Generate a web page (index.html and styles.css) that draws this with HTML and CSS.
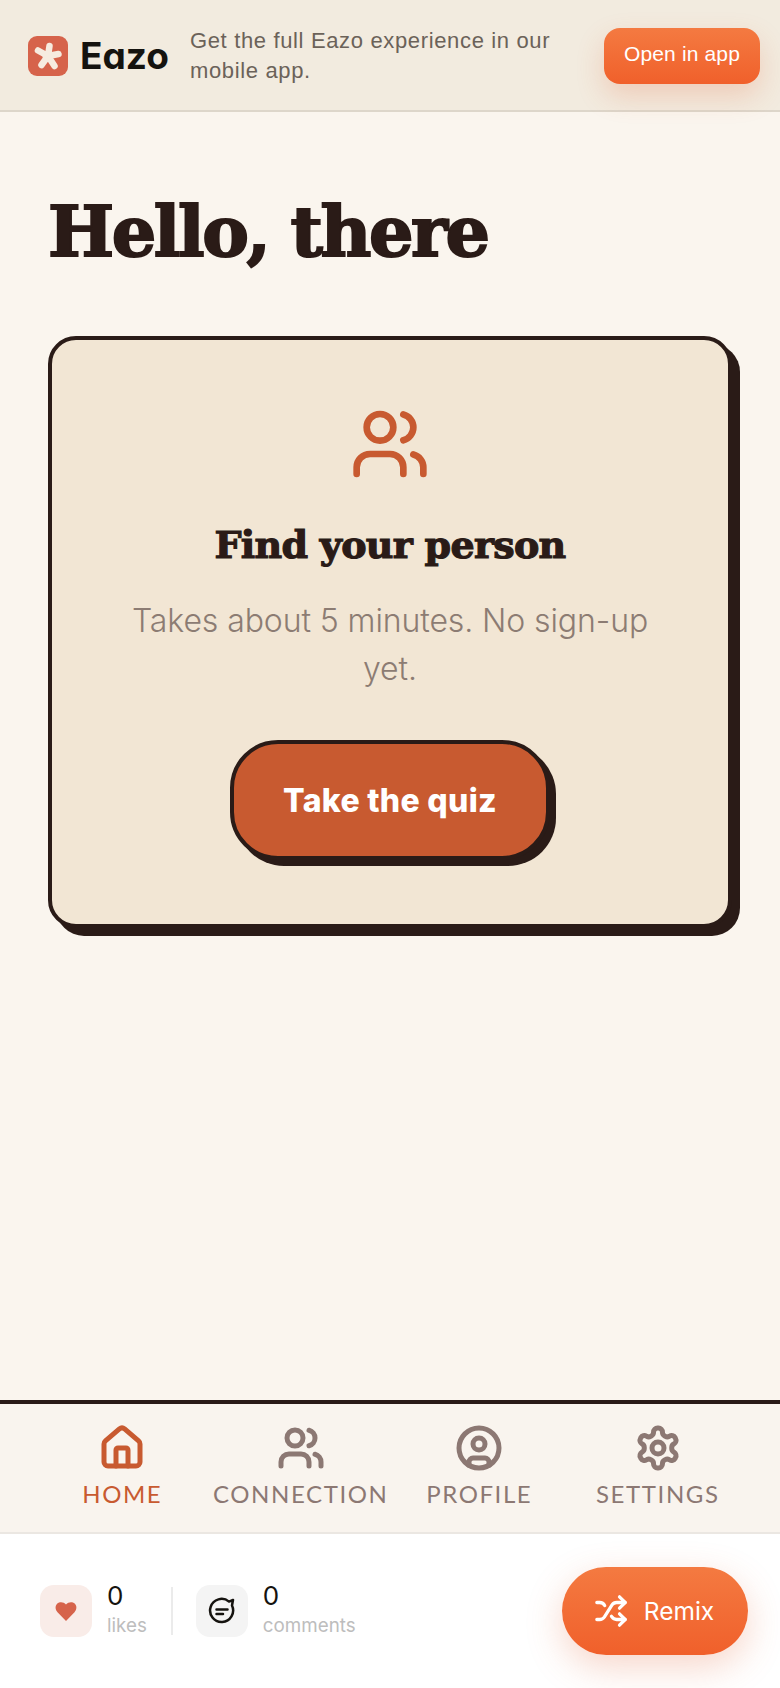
FILE: index.html
```html
<!DOCTYPE html>
<html lang="en">
<head>
<meta charset="utf-8">
<title>Eazo</title>
<link rel="stylesheet" href="styles.css">
</head>
<body>
<div class="page">
  <header class="banner">
    <div class="logo">
      <svg class="logo-mark" viewBox="0 0 40 40"><rect width="40" height="40" rx="9" fill="#d6634b"/><circle cx="20" cy="20" r="5.500" fill="#f6ebdf"/><g stroke="#f6ebdf" stroke-width="6.500" stroke-linecap="round"><path d="M20 20 21.500 10M20 20 10 14.500M20 20 30.500 18M20 20 13.500 29M20 20 26.500 30"/></g></svg>
      <span class="logo-word">Eazo</span>
    </div>
    <p class="banner-text">Get the full Eazo experience in our mobile app.</p>
    <button class="open-btn">Open in app</button>
  </header>

  <main class="main">
    <h1 class="hello">Hello, there</h1>
    <section class="card">
      <svg class="card-icon" viewBox="0 0 24 24"><path d="M16 21v-2a4 4 0 0 0-4-4H6a4 4 0 0 0-4 4v2"/><circle cx="9" cy="7" r="4"/><path d="M22 21v-2a4 4 0 0 0-3-3.87"/><path d="M16 3.13a4 4 0 0 1 0 7.75"/></svg>
      <h2 class="card-title">Find your person</h2>
      <p class="card-sub">Takes about 5 minutes. No sign-up yet.</p>
      <button class="quiz-btn">Take the quiz</button>
    </section>
  </main>

  <nav class="nav">
    <a class="nav-item active">
      <svg class="nav-icon" viewBox="0 0 24 24"><path d="M15 21v-8a1 1 0 0 0-1-1h-4a1 1 0 0 0-1 1v8"/><path d="M3 10a2 2 0 0 1 .709-1.528l7-5.999a2 2 0 0 1 2.582 0l7 5.999A2 2 0 0 1 21 10v9a2 2 0 0 1-2 2H5a2 2 0 0 1-2-2z"/></svg>
      <span>HOME</span>
    </a>
    <a class="nav-item">
      <svg class="nav-icon" viewBox="0 0 24 24"><path d="M16 21v-2a4 4 0 0 0-4-4H6a4 4 0 0 0-4 4v2"/><circle cx="9" cy="7" r="4"/><path d="M22 21v-2a4 4 0 0 0-3-3.87"/><path d="M16 3.13a4 4 0 0 1 0 7.75"/></svg>
      <span>CONNECTION</span>
    </a>
    <a class="nav-item">
      <svg class="nav-icon" viewBox="0 0 24 24"><circle cx="12" cy="12" r="10"/><circle cx="12" cy="10" r="3"/><path d="M7 20.662V19a2 2 0 0 1 2-2h6a2 2 0 0 1 2 2v1.662"/></svg>
      <span>PROFILE</span>
    </a>
    <a class="nav-item">
      <svg class="nav-icon" viewBox="0 0 24 24"><path d="M12.22 2h-.44a2 2 0 0 0-2 2v.18a2 2 0 0 1-1 1.73l-.43.25a2 2 0 0 1-2 0l-.15-.08a2 2 0 0 0-2.73.73l-.22.38a2 2 0 0 0 .73 2.73l.15.1a2 2 0 0 1 1 1.72v.51a2 2 0 0 1-1 1.74l-.15.09a2 2 0 0 0-.73 2.73l.22.38a2 2 0 0 0 2.73.73l.15-.08a2 2 0 0 1 2 0l.43.25a2 2 0 0 1 1 1.73V20a2 2 0 0 0 2 2h.44a2 2 0 0 0 2-2v-.18a2 2 0 0 1 1-1.73l.43-.25a2 2 0 0 1 2 0l.15.08a2 2 0 0 0 2.73-.73l.22-.39a2 2 0 0 0-.73-2.73l-.15-.08a2 2 0 0 1-1-1.74v-.5a2 2 0 0 1 1-1.74l.15-.09a2 2 0 0 0 .73-2.73l-.22-.38a2 2 0 0 0-2.73-.73l-.15.08a2 2 0 0 1-2 0l-.43-.25a2 2 0 0 1-1-1.73V4a2 2 0 0 0-2-2z"/><circle cx="12" cy="12" r="3"/></svg>
      <span>SETTINGS</span>
    </a>
  </nav>

  <footer class="stats-bar">
    <div class="stat">
      <div class="stat-box like-box">
        <svg class="heart" viewBox="0 0 24 24"><path d="M12 22 3.500 13.200C1 10.600 1 6.800 3.300 4.600 5.600 2.500 9.500 2.700 12 5.400 14.500 2.700 18.400 2.500 20.700 4.600 23 6.800 23 10.600 20.500 13.200Z"/></svg>
      </div>
      <div class="stat-text"><span class="num">0</span><span class="lbl">likes</span></div>
    </div>
    <div class="divider"></div>
    <div class="stat">
      <div class="stat-box chat-box">
        <svg class="chat" viewBox="0 0 28 28"><path d="M25 3 21 4.600A11.500 11.500 0 1 0 24 8.500Z"/><path d="M8.500 12.500h11M8.500 17h6.500"/></svg>
      </div>
      <div class="stat-text"><span class="num">0</span><span class="lbl">comments</span></div>
    </div>
    <button class="remix-btn">
      <svg class="remix-icon" viewBox="0 0 24 24"><path d="m18 14 4 4-4 4"/><path d="m18 2 4 4-4 4"/><path d="M2 18h1.973a4 4 0 0 0 3.300-1.700l5.454-8.600a4 4 0 0 1 3.300-1.700H22"/><path d="M2 6h1.972a4 4 0 0 1 3.600 2.200"/><path d="M22 18h-6.041a4 4 0 0 1-3.300-1.800l-.359-.450"/></svg>
      <span>Remix</span>
    </button>
  </footer>
</div>
</body>
</html>
```
FILE: styles.css
```css
* { box-sizing: border-box; }
html, body { margin: 0; padding: 0; }
body { background: #faf5ee; font-family: "Inter", "Liberation Sans", sans-serif; }
.page { width: 780px; height: 1688px; display: flex; flex-direction: column; overflow: hidden; }
p, h1, h2 { margin: 0; }
button { border: 0; font: inherit; padding: 0; }

.banner { height: 112px; flex: none; display: flex; align-items: center; padding: 2px 20px 0 28px; background: #f2ebdf; border-bottom: 2px solid #ddd6ca; }
.logo { display: flex; align-items: center; gap: 12px; }
.logo-mark { width: 40px; height: 40px; display: block; }
.logo-word { font-family: "Inter", sans-serif; font-feature-settings: "cv11"; font-weight: 700; font-size: 37px; line-height: 40px; color: #15130f; }
.banner-text { flex: 1; margin-left: 21px; margin-right: 19px; font-family: "Liberation Sans", sans-serif; font-size: 22px; line-height: 30px; color: #6b6259; letter-spacing: .65px; }
.open-btn { width: 156px; height: 56px; flex: none; padding-bottom: 5px; border-radius: 16px; background: linear-gradient(180deg, #f47a41, #f0602b); color: #fff; font-family: "Liberation Sans", sans-serif; font-size: 21px; letter-spacing: .15px; box-shadow: 0 12px 28px rgba(226, 96, 50, .22); }

.main { flex: 1; padding: 80px 48px 0; }
.hello { font-family: "DejaVu Serif", serif; font-weight: 900; font-size: 70px; line-height: 80px; color: #2a1b17; letter-spacing: -2.400px; -webkit-text-stroke: 2px #2a1b17; }
.card { margin-top: 64px; height: 592px; border: 4px solid #2a1b17; border-radius: 28px; background: #f2e6d4; box-shadow: 8px 8px 0 #2a1b17; padding: 64px 60px; display: flex; flex-direction: column; align-items: center; }
.card-icon { width: 80px; height: 80px; flex: none; fill: none; stroke: #c85a30; stroke-width: 2; stroke-linecap: round; stroke-linejoin: round; }
.card-title { margin-top: 32px; font-family: "DejaVu Serif", serif; font-weight: 900; font-size: 38px; line-height: 58px; color: #2a1b17; letter-spacing: -.7px; -webkit-text-stroke: 1.200px #2a1b17; }
.card-sub { margin-top: 23px; font-size: 32px; line-height: 48px; font-weight: 300; color: #8c7c73; text-align: center; letter-spacing: -.1px; }
.quiz-btn { margin-top: 47px; width: 320px; height: 120px; flex: none; border: 4px solid #2a1b17; border-radius: 48px; background: #c85a30; color: #fff; font-weight: 800; font-size: 32px; letter-spacing: .3px; box-shadow: 6px 6px 0 #2a1b17; }

.nav { flex: none; height: 134px; border-top: 4px solid #2a1b17; border-bottom: 2px solid #ebe7e2; background: #f9f4ee; display: grid; grid-template-columns: repeat(4, 1fr); padding: 20px 33px 0; }
.nav-item { display: flex; flex-direction: column; align-items: center; gap: 6px; color: #8c7873; font-family: "Lato", sans-serif; font-size: 24px; line-height: 32px; letter-spacing: 1.600px; }
.nav-item.active { color: #c85a30; }
.nav-icon { width: 48px; height: 48px; flex: none; fill: none; stroke: currentColor; stroke-width: 2.500; stroke-linecap: round; stroke-linejoin: round; }

.stats-bar { flex: none; height: 154px; background: #fff; display: flex; align-items: center; padding: 0 32px 0 40px; }
.stat { display: flex; align-items: center; gap: 15px; }
.stat-box { width: 52px; height: 52px; border-radius: 14px; display: flex; align-items: center; justify-content: center; }
.like-box { background: #f9ece8; }
.chat-box { background: #f4f4f4; }
.heart { width: 24px; height: 24px; fill: #d6634b; }
.chat { width: 28px; height: 28px; fill: none; stroke: #15130f; stroke-width: 2.500; stroke-linecap: round; stroke-linejoin: round; }
.stat-text { display: flex; flex-direction: column; padding-top: 3px; }
.num { font-size: 26px; line-height: 26px; color: #15130f; }
.lbl { font-size: 18.800px; line-height: 34px; color: #bdbdbd; }
.divider { width: 2px; height: 48px; background: #ebebeb; margin: 0 23px 0 24px; }
.remix-btn { margin-left: auto; width: 186px; height: 88px; padding-right: 2px; border-radius: 44px; background: linear-gradient(180deg, #f47a41, #f0602b); color: #fff; display: flex; align-items: center; justify-content: center; gap: 16px; font-size: 24.500px; box-shadow: 0 12px 36px rgba(226, 96, 50, .26); }
.remix-icon { width: 34px; height: 34px; fill: none; stroke: #fff; stroke-width: 2.300; stroke-linecap: round; stroke-linejoin: round; }
```
